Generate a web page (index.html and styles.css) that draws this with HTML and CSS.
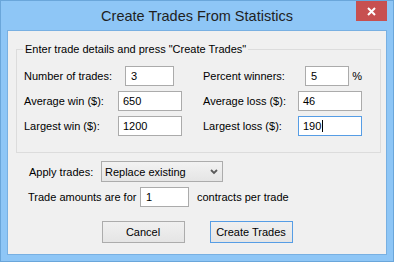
FILE: index.html
```html
<!DOCTYPE html>
<html>
<head>
<meta charset="utf-8">
<link rel="stylesheet" href="styles.css">
</head>
<body>
<div class="window">
  <div class="titlebar">
    <span class="spacer"></span>
    <div class="title">Create Trades From Statistics</div>
    <div class="controls">
      <div class="close">
        <svg width="9" height="9" viewBox="0 0 9 9"><path d="M1 1 L8 8 M8 1 L1 8" stroke="#fff" stroke-width="2" fill="none"/></svg>
      </div>
    </div>
  </div>
  <div class="client">
    <fieldset class="group">
      <legend>Enter trade details and press "Create Trades"</legend>
      <div class="grid">
        <div class="label">Number of trades:</div>
        <div class="cell"><div class="field short">3</div></div>
        <div></div>
        <div class="label">Percent winners:</div>
        <div class="cell"><div class="field short">5</div><span class="pct">%</span></div>

        <div class="label">Average win ($):</div>
        <div class="cell"><div class="field">650</div></div>
        <div></div>
        <div class="label">Average loss ($):</div>
        <div class="cell"><div class="field">46</div></div>

        <div class="label">Largest win ($):</div>
        <div class="cell"><div class="field">1200</div></div>
        <div></div>
        <div class="label">Largest loss ($):</div>
        <div class="cell"><div class="field focused">190<span class="caret"></span></div></div>
      </div>
    </fieldset>
    <div class="row apply">
      <div class="label apply-label">Apply trades:</div>
      <div class="combo">
        <span>Replace existing</span>
        <svg class="arrow" width="8" height="6" viewBox="0 0 8 6"><path d="M1 1 L4 4 L7 1" stroke="#5a5a5a" stroke-width="1.8" fill="none"/></svg>
      </div>
    </div>
    <div class="row amounts">
      <div class="label amount-label">Trade amounts are for</div>
      <div class="field short">1</div>
      <div class="label after">contracts per trade</div>
    </div>
    <div class="buttons">
      <div class="btn">Cancel</div>
      <div class="btn default">Create Trades</div>
    </div>
  </div>
</div>
</body>
</html>
```
FILE: styles.css
```css
* { box-sizing: border-box; }
html, body { margin: 0; padding: 0; }
body {
  width: 394px;
  height: 262px;
  overflow: hidden;
  font-family: "Liberation Sans", Arial, sans-serif;
  font-size: 11px;
  color: #000;
}
.window {
  width: 394px;
  height: 262px;
  border: 1px solid #6aa6da;
  background: #8ec6f6;
  display: flex;
  flex-direction: column;
}
.titlebar {
  height: 29px;
  flex: none;
  display: grid;
  grid-template-columns: 1fr auto 1fr;
  padding: 0 6px;
}
.title {
  align-self: center;
  font-size: 14.5px;
  color: #1f1f1f;
  padding-top: 1px;
}
.controls {
  display: flex;
  justify-content: flex-end;
  align-items: flex-start;
}
.close {
  width: 31px;
  height: 20px;
  background: #c75050;
  display: flex;
  align-items: center;
  justify-content: center;
}
.close svg { display: block; }
.client {
  margin: 0 6px 6px;
  border: 1px solid #78b0e2;
  background: #f0f0f0;
  height: 225px;
  display: flex;
  flex-direction: column;
}
.group {
  margin: 12px 5px 0 8px;
  padding: 10px 0 16px 7px;
  border: 1px solid #dcdcdc;
  min-width: 0;
}
.group legend {
  margin-left: -1px;
  padding: 0 2px;
  line-height: 13px;
}
.grid {
  display: grid;
  grid-template-columns: 94px 64px 21px 95px 64px;
  grid-auto-rows: 20px;
  row-gap: 5px;
  align-items: center;
}
.label { white-space: nowrap; }
.cell {
  display: flex;
  align-items: center;
  height: 20px;
}
.field {
  width: 64px;
  height: 20px;
  border: 1px solid #ababab;
  background: #fff;
  padding-left: 4px;
  display: flex;
  align-items: center;
  white-space: nowrap;
}
.field.short {
  width: 49px;
  padding-left: 5px;
}
.cell .field.short { margin-left: 7px; }
.field.focused { border-color: #569de5; }
.caret {
  display: inline-block;
  width: 1px;
  height: 12px;
  background: #000;
  margin-left: 1px;
}
.pct { margin-left: 3px; }
.row {
  display: flex;
  align-items: center;
  padding-left: 20px;
}
.apply {
  margin-top: 8px;
  height: 21px;
}
.apply-label {
  margin-left: 1px;
  width: 72px;
}
.combo {
  width: 122px;
  height: 21px;
  border: 1px solid #acacac;
  background: linear-gradient(#f2f2f2, #e5e5e5);
  display: flex;
  align-items: center;
  justify-content: space-between;
  padding: 0 4px 0 3px;
}
.arrow { display: block; }
.amounts {
  margin-top: 5px;
  height: 20px;
}
.amount-label { width: 112px; }
.after { margin-left: 8px; }
.buttons {
  margin-top: 14px;
  display: flex;
  justify-content: center;
  gap: 25px;
}
.btn {
  width: 83px;
  height: 22px;
  border: 1px solid #acacac;
  background: linear-gradient(#f0f0f0, #e5e5e5);
  display: flex;
  align-items: center;
  justify-content: center;
}
.btn.default { border-color: #569de5; }
```
